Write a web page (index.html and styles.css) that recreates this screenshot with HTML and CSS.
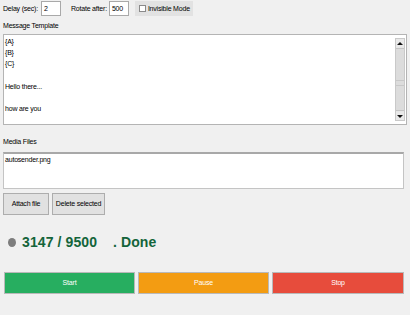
FILE: index.html
```html
<!DOCTYPE html>
<html>
<head>
<meta charset="utf-8">
<link rel="stylesheet" href="styles.css">
</head>
<body>
<div class="app">
  <div class="toprow">
    <span class="lbl lbl-delay">Delay (sec):</span>
    <span class="field f-delay">2</span>
    <span class="lbl lbl-rotate">Rotate after:</span>
    <span class="field f-rotate">500</span>
    <span class="check-group"><span class="checkbox"></span><span class="lbl">Invisible Mode</span></span>
  </div>
  <div class="section-label msg-label">Message Template</div>
  <div class="textarea">
    <div class="text-lines">
      <div>{A}</div>
      <div>{B}</div>
      <div>{C}</div>
      <div>&nbsp;</div>
      <div>Hello there...</div>
      <div>&nbsp;</div>
      <div>how are you</div>
    </div>
    <div class="scrollbar">
      <div class="sb-btn"><span class="tri-up"></span></div>
      <div class="sb-track"><div class="sb-grip"></div></div>
      <div class="sb-btn"><span class="tri-down"></span></div>
    </div>
  </div>
  <div class="section-label media-label">Media Files</div>
  <div class="listbox"><div>autosender.png</div></div>
  <div class="btnrow">
    <span class="btn btn-attach">Attach file</span>
    <span class="btn btn-delete">Delete selected</span>
  </div>
  <div class="status">
    <span class="dot"></span>
    <span class="status-text">3147 / 9500&nbsp;&nbsp;&nbsp;&nbsp;. Done</span>
  </div>
  <div class="actions">
    <span class="action start">Start</span>
    <span class="action pause">Pause</span>
    <span class="action stop">Stop</span>
  </div>
</div>
</body>
</html>
```
FILE: styles.css
```css
html, body {
  margin: 0;
  padding: 0;
  background: #f0f0f0;
}
body {
  width: 410px;
  height: 315px;
  overflow: hidden;
  font-family: "Liberation Sans", Arial, sans-serif;
  font-size: 7px;
  letter-spacing: -0.2px;
  color: #000;
}
.app {
  display: flex;
  flex-direction: column;
}
.toprow {
  display: flex;
  align-items: center;
  height: 15px;
  margin-top: 1px;
  padding-left: 3px;
}
.lbl {
  white-space: nowrap;
  line-height: 15px;
  flex-shrink: 0;
}
.lbl-delay { margin-right: 3px; }
.field {
  box-sizing: border-box;
  flex-shrink: 0;
  height: 15px;
  background: #fff;
  border: 1px solid #a9a9a9;
  padding-left: 2px;
  line-height: 13px;
}
.f-delay { width: 20px; margin-right: 10px; }
.lbl-rotate { margin-right: 2px; }
.f-rotate { width: 20px; margin-right: 6px; }
.check-group {
  display: flex;
  align-items: center;
  flex-shrink: 0;
  height: 15px;
  background: #e2e2e2;
  padding: 0 3px 0 4px;
  box-sizing: border-box;
}
.checkbox {
  box-sizing: border-box;
  flex-shrink: 0;
  width: 7px;
  height: 7px;
  background: #fff;
  border: 1px solid #8a8a8a;
  margin-right: 2px;
}
.section-label {
  padding-left: 3px;
  line-height: 9px;
  height: 9px;
}
.msg-label { margin-top: 5px; }
.textarea {
  box-sizing: border-box;
  margin: 4px 3px 0 3px;
  height: 91px;
  background: #fff;
  border: 1px solid #b4b4b4;
  display: flex;
}
.text-lines {
  flex: 1;
  padding: 1px 0 0 1px;
  line-height: 11.2px;
}
.scrollbar {
  box-sizing: border-box;
  width: 10px;
  margin: 3px 1px 3px 0;
  display: flex;
  flex-direction: column;
  background: #e6e6e6;
  border: 1px solid #c9c9c9;
}
.sb-btn {
  height: 8px;
  display: flex;
  align-items: center;
  justify-content: center;
  background: #e9e9e9;
}
.tri-up {
  width: 0; height: 0;
  border-left: 3px solid transparent;
  border-right: 3px solid transparent;
  border-bottom: 3px solid #111;
}
.tri-down {
  width: 0; height: 0;
  border-left: 3px solid transparent;
  border-right: 3px solid transparent;
  border-top: 3px solid #111;
}
.sb-track {
  flex: 1;
  margin: 1px 0;
  background: #dcdcdc;
  border-top: 1px solid #c4c4c4;
  border-bottom: 1px solid #c4c4c4;
  display: flex;
  align-items: center;
}
.sb-grip {
  width: 100%;
  height: 4px;
  margin-top: 6px;
  border-top: 1px solid #c8c8c8;
  border-bottom: 1px solid #c8c8c8;
}
.media-label { margin-top: 12px; }
.listbox {
  box-sizing: border-box;
  margin: 6px 6px 0 3px;
  height: 37px;
  background: #fff;
  border: 1px solid #c4c4c4;
  border-top: 2px solid #a8a8a8;
  padding: 1px 0 0 1px;
  line-height: 9px;
}
.btnrow {
  display: flex;
  gap: 3px;
  margin-top: 4px;
  padding-left: 3px;
}
.btn {
  box-sizing: border-box;
  height: 22px;
  line-height: 20px;
  background: #e1e1e1;
  border: 1px solid #adadad;
  text-align: center;
}
.btn-attach { width: 46px; }
.btn-delete { width: 53px; }
.status {
  display: flex;
  align-items: center;
  height: 14px;
  margin-top: 20px;
  padding-left: 8px;
}
.dot {
  width: 8px;
  height: 9px;
  border-radius: 50%;
  background: #7d7d7d;
  margin-right: 6px;
}
.status-text {
  font-family: "Liberation Sans", Arial, sans-serif;
  font-weight: bold;
  font-size: 14px;
  color: #14643a;
  white-space: nowrap;
  letter-spacing: 0.1px;
}
.actions {
  display: grid;
  grid-template-columns: 131px 131px 132px;
  gap: 3px;
  margin-top: 23px;
  padding-left: 4px;
}
.action {
  box-sizing: border-box;
  height: 22px;
  line-height: 20px;
  text-align: center;
  color: #fff;
  border: 1px solid #b9b9b9;
}
.start { background: #27ae60; }
.pause { background: #f39c12; }
.stop { background: #e74c3c; }
```
